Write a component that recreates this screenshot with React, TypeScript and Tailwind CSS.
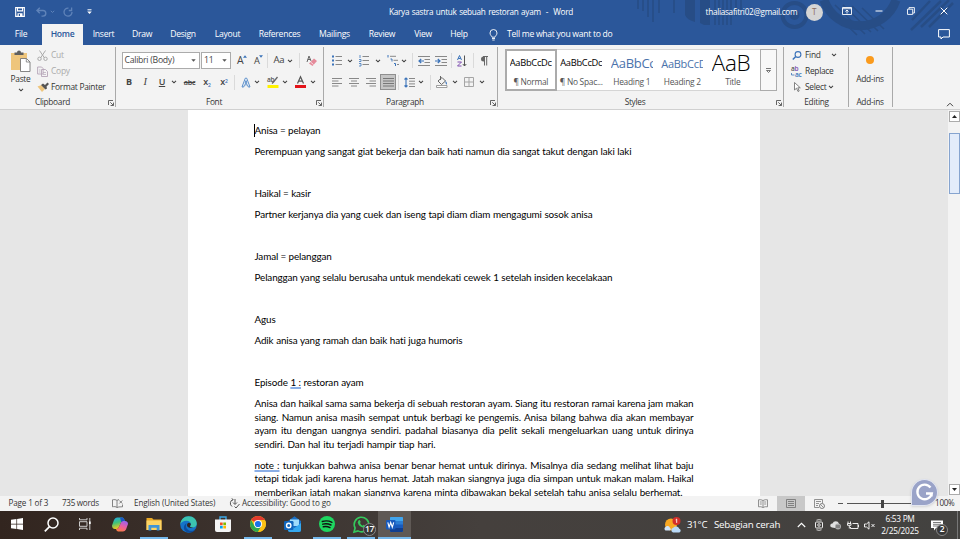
import React, { FC, ReactNode } from "react";
import clsx from "clsx";

interface IIconProps {
  w?: number;
  h?: number;
  box?: string;
  className?: string;
  children?: ReactNode;
}

const Icon: FC<IIconProps> = ({ w = 14, h = 14, box, className, children }) => (
  <svg width={w} height={h} viewBox={box ?? `0 0 ${w} ${h}`} fill="none" className={clsx("block shrink-0 overflow-visible", className)}>
    {children}
  </svg>
);

const Chevron: FC<{ className?: string }> = ({ className }) => (
  <Icon w={6} h={4} className={className}>
    <path d="M1 .8 3 2.8 5 .8" stroke="#444" strokeWidth="1.1" />
  </Icon>
);

const Triangle: FC = () => (
  <Icon w={5} h={3}>
    <path d="M.3.2h4.4L2.5 2.7z" fill="#555" />
  </Icon>
);

const Sep: FC<{ className?: string }> = ({ className }) => (
  <div className={clsx("w-px h-[15px] shrink-0 bg-[#dadada]", className)} />
);

const Launcher: FC = () => (
  <Icon w={6} h={6}>
    <path d="M.5 5V.5H5M2.3 2.3l3 3M5.5 2.6v2.9H2.6" stroke="#555" strokeWidth=".9" />
  </Icon>
);

interface IGroupProps {
  label: string;
  className: string;
  launcher?: boolean;
  children: ReactNode;
}

const Group: FC<IGroupProps> = ({ label, className, launcher, children }) => (
  <section className={clsx("relative flex flex-col shrink-0 h-full", className)}>
    <div className="h-[52px]">{children}</div>
    <div className="h-[13px] mt-px flex items-center justify-center text-[8.3px] font-medium text-[#333]">{label}</div>
    {launcher && (
      <div className="absolute right-[2.5px] bottom-[3px]">
        <Launcher />
      </div>
    )}
    <div className="absolute right-0 top-[2px] w-px h-[60px] bg-[#a9a9a9]" />
  </section>
);

const tabs = [
  { name: "File", className: "w-[42px]" },
  { name: "Home", className: "w-[41px] bg-[#f3f3f3] text-[#2b579a] font-semibold" },
  { name: "Insert", className: "w-[41px]" },
  { name: "Draw", className: "w-[36px]" },
  { name: "Design", className: "w-[46px]" },
  { name: "Layout", className: "w-[43px]" },
  { name: "References", className: "w-[61px]" },
  { name: "Mailings", className: "w-[49px]" },
  { name: "Review", className: "w-[46px]" },
  { name: "View", className: "w-[36px]" },
  { name: "Help", className: "w-[36px]" },
];

const stripes = [
  [638, 9], [643, 11], [648, 17], [653, 22], [659, 13], [674, 13],
  [715, 25], [719, 25], [723, 25], [727, 25], [731, 25], [736, 16], [741, 11],
];

const Header: FC = () => (
  <header className="relative h-[45px] bg-[#2b579a] text-white">
    <svg className="absolute inset-0" width="960" height="45" fill="none">
      {stripes.map(([x, h]) => (
        <path key={x} d={`M${x} 0v${h}`} stroke="#274d86" strokeWidth="1.6" />
      ))}
      <path d="M685 0h10v22q-8-2-10-7zM700 0h10v25h-6l-4-2z" fill="#274d86" />
      <circle cx="794.500" cy="15" r="12" stroke="#274d86" strokeWidth="4" />
      <circle cx="794.500" cy="15" r="5" fill="#274d86" />
      <path d="M824 0a38 38 0 0 0 72 0" stroke="#274d86" strokeWidth="9" />
      <path d="M828 7l29 28M835 5l30 29M843 5l28 27M852 6l26 25M862 8l22 21" stroke="#274d86" strokeWidth="1.600" />
      <path d="M911 30 941 1M921 27l28-27M912 20l18-19M929 27l24-24" stroke="#274d86" strokeWidth="2.500" />
    </svg>
    <div className="relative h-6 flex items-center text-[8.2px] font-medium">
      <Icon w={10} h={10} className="ml-[15px]">
        <path d="M.7.700h8.600v8.600H.7z" stroke="#fff" strokeWidth="1.200" />
        <path d="M2 1h6v3.500H2zM2.500 6.200h5V9h-5z" fill="#fff" />
        <path d="M3 1.600h4v1.700H3zM3.800 7h1.200v2H3.800z" fill="#2b579a" />
      </Icon>
      <Icon w={11} h={10} className="ml-[10.500px]">
        <path d="M3.800.8 1 3.500l2.800 2.700M1 3.500h6a2.800 2.800 0 0 1 0 5.600H5.500" stroke="#5f83b9" strokeWidth="1.400" />
      </Icon>
      <Icon w={5} h={4} className="ml-[3px]">
        <path d="M.8.800 2.500 2.500 4.200.8" stroke="#5f83b9" />
      </Icon>
      <Icon w={10} h={10} className="ml-[8.500px]">
        <path d="M5.500 1.200A4 4 0 1 0 9 5M8.600.5v3H5.800" stroke="#5f83b9" strokeWidth="1.300" />
      </Icon>
      <Icon w={5} h={6} className="ml-[14px]">
        <path d="M.5.800h4" stroke="#fff" />
        <path d="M.2 2.500h4.600L2.500 5z" fill="#fff" />
      </Icon>
      <span className="ml-[297px] mt-px w-[184px] shrink-0 whitespace-nowrap [text-align-last:justify]">Karya sastra untuk sebuah restoran ayam &nbsp;- &nbsp;Word</span>
      <span className="ml-[132.500px] w-[95px] shrink-0 whitespace-nowrap">thaliasafitri02@gmail.com</span>
      <span className="ml-[5px] size-[17px] shrink-0 rounded-full bg-[#d5d5d5] text-[#8a6a5a] flex items-center justify-center">T</span>
      <Icon w={10} h={8} className="ml-[19px] -mt-[2px]">
        <path d="M.5.500h9v7h-9zM.5 1.700h9M5 6.500V3M3.400 4.500 5 3l1.600 1.500" stroke="#fff" strokeWidth=".9" />
      </Icon>
      <Icon w={8} h={2} className="ml-[23px] -mt-[3px]">
        <path d="M.5 1h7" stroke="#fff" />
      </Icon>
      <Icon w={8} h={8} className="ml-[24.500px] -mt-[3px]">
        <path d="M.5 2.200h5.200v5.200H.5zM2 2V.6h5.400V6H6" stroke="#fff" strokeWidth=".9" />
      </Icon>
      <Icon w={8} h={8} className="ml-[24.500px] -mt-[3px]">
        <path d="m.7.700 6.600 6.600m0-6.600L.7 7.300" stroke="#fff" />
      </Icon>
    </div>
    <nav className="relative h-[21px] flex items-center text-[8.6px] font-medium">
      {tabs.map((tab) => (
        <div key={tab.name} className={clsx("h-full flex items-center justify-center", tab.className)}>
          {tab.name}
        </div>
      ))}
      <Icon w={9} h={12} className="ml-[12px]">
        <path d="M3 8.200C2.800 6.800 1 6.200 1 4a3.500 3.500 0 0 1 7 0c0 2.200-1.800 2.800-2 4.200zM3 9.500h3M3.300 11h2.400" stroke="#fff" strokeWidth=".9" />
      </Icon>
      <span className="ml-[9px] whitespace-nowrap">Tell me what you want to do</span>
      <Icon w={12} h={11} className="ml-auto mr-[10px] -mt-[1px]">
        <path d="M.6.600h10.800v7.400H5L3 10V8H.6z" stroke="#fff" />
      </Icon>
    </nav>
  </header>
);

const Clipboard: FC = () => (
  <Group label="Clipboard" className="w-[116px] pl-2 pr-[19px]" launcher>
    <div className="flex">
      <div className="w-[25px] shrink-0 flex flex-col items-center pt-[5px] text-[8.400px] text-[#333]">
        <Icon w={21} h={22}>
          <path d="M1 3h16v17H1z" fill="#eec57c" />
          <path d="M4.500 5V2.500H7a2 2 0 0 1 4 0h2.500V5z" fill="#5e5e5e" />
          <path d="M10.500 8.500h6l3.500 3.500v9.500h-9.500z" fill="#fff" stroke="#777" strokeWidth=".9" />
          <path d="M16.300 8.500V12H20" stroke="#777" strokeWidth=".8" />
        </Icon>
        <span className="leading-[11px] mt-[1px]">Paste</span>
        <Chevron className="mt-[4px]" />
      </div>
      <div className="ml-[4px] pt-[2px] text-[8.500px] text-[#aaa]">
        <div className="h-[16px] flex items-center gap-[3px]">
          <Icon w={11} h={11}>
            <path d="M2.500.500 7.500 8M8.500.500 3.500 8" stroke="#aaa" />
            <circle cx="2.500" cy="8.800" r="1.700" stroke="#aaa" />
            <circle cx="8.500" cy="8.800" r="1.700" stroke="#aaa" />
          </Icon>
          Cut
        </div>
        <div className="h-[16px] flex items-center gap-[3px]">
          <Icon w={11} h={11}>
            <path d="M.6 1h4l1.500 1.500V8H.6zM4.500 3.500h4l2 2v5h-6z" fill="#f3f3f3" stroke="#b5a5b8" strokeWidth=".9" />
            <path d="M6 6.500h3M6 8.500h3M2 4h1.500M2 6h1.500" stroke="#b5a5b8" strokeWidth=".7" />
          </Icon>
          Copy
        </div>
        <div className="h-[16px] flex items-center gap-[2px] text-[#333] whitespace-nowrap">
          <Icon w={12} h={10}>
            <path d="M.5 4.500 4.500 3l3.500 4-3 3z" fill="#eec57c" />
            <path d="m4 3 2-1.500L8 3l2.500-2.500L12 2 9.500 4.500l.5 2-1.500 1z" fill="#555" />
          </Icon>
          <span className="text-[8.400px]">Format Painter</span>
        </div>
      </div>
    </div>
  </Group>
);

const FontGroup: FC = () => (
  <Group label="Font" className="w-[208px] pr-[12px]" launcher>
    <div className="h-[31px] pl-[5.500px] flex items-center text-[#444]">
      <div className="w-[78px] h-[17px] shrink-0 border border-[#ababab] bg-white flex items-center justify-between pl-[2px] pr-[3px] text-[8.700px]">
        Calibri (Body)
        <Triangle />
      </div>
      <div className="ml-[1.500px] w-[30px] h-[17px] shrink-0 border border-[#ababab] bg-white flex items-center justify-between pl-[2px] pr-[3px] text-[8.700px]">
        11
        <Triangle />
      </div>
      <span className="ml-[6px] text-[10.500px]">A</span>
      <Icon w={4} h={3} className="-mt-[8px]"><path d="M0 2.700 2 .3l2 2.400z" fill="#3b73b9" /></Icon>
      <span className="ml-[6.500px] text-[9.300px]">A</span>
      <Icon w={4} h={3} className="-mt-[8px]"><path d="M0 .3 2 2.700 4 .3z" fill="#3b73b9" /></Icon>
      <Sep className="ml-[4px]" />
      <span className="ml-[5px] text-[9.600px]">Aa</span>
      <Chevron className="ml-[3px]" />
      <Sep className="ml-[6px]" />
      <Icon w={11} h={12} className="ml-[6px]">
        <path d="M1 7 3 1l2 5M1.800 4.500h2.800" stroke="#666" />
        <path d="m3 8.500 5-5 3 2.500-4.500 5z" fill="#e58a9a" />
        <path d="m4.500 7 3 2.500" stroke="#fff" strokeWidth=".7" />
      </Icon>
    </div>
    <div className="h-[12px] pl-[9px] flex items-center text-[#444] text-[9px]">
      <span className="w-[8px] shrink-0 text-center font-bold">B</span>
      <span className="ml-[8px] w-[8px] shrink-0 text-center italic font-['Liberation_Serif'] text-[10.500px]">I</span>
      <span className="ml-[9px] w-[8px] shrink-0 text-center underline font-semibold">U</span>
      <Chevron className="ml-[5px]" />
      <span className="ml-[6px] w-[13px] shrink-0 text-center line-through text-[7.300px] font-semibold tracking-[-.3px]">abc</span>
      <span className="ml-[6px] w-[10px] shrink-0 text-center font-semibold whitespace-nowrap">x<sub className="text-[5px] text-[#3b73b9]">2</sub></span>
      <span className="ml-[7px] w-[10px] shrink-0 text-center font-semibold whitespace-nowrap">x<sup className="text-[5px] text-[#3b73b9]">2</sup></span>
      <Sep className="ml-[5px]" />
      <Icon w={10} h={11} className="ml-[6px]">
        <path d="M1 10 4.300 1.200h1.400L9 10H7.300l-.8-2.200h-3L2.700 10zM4 6.300h2L5 3.500z" fill="#fff" stroke="#4a82c4" strokeWidth=".9" />
      </Icon>
      <Chevron className="ml-[3px]" />
      <Icon w={12} h={12} className="ml-[7px]">
        <text x="0" y="6" fontSize="6.500" fontWeight="600" fill="#555">ab</text>
        <path d="m10.500 1-4 5-1.500 1.500" stroke="#666" strokeWidth="1.300" />
        <path d="M.5 9h11v3H.5z" fill="#fff200" />
      </Icon>
      <Chevron className="ml-[3px]" />
      <Icon w={11} h={12} className="ml-[7px]">
        <path d="M2.500 7.500 5.500.8l3 6.700M3.600 5.200h3.800" stroke="#555" strokeWidth="1.200" />
        <path d="M0 9h11v3H0z" fill="#e3141a" />
      </Icon>
      <Chevron className="ml-[3.500px]" />
    </div>
  </Group>
);

const ParagraphGroup: FC = () => (
  <Group label="Paragraph" className="w-[174px] pr-[12px]" launcher>
    <div className="h-[31px] pl-[8px] flex items-center">
      <Icon w={10} h={11}>
        <path d="M0 1.500h2M0 5.500h2M0 9.500h2" stroke="#3b73b9" strokeWidth="1.800" />
        <path d="M3.500 1.500H10M3.500 5.500H10M3.500 9.500H10" stroke="#888" />
      </Icon>
      <Chevron className="ml-[5px]" />
      <Icon w={10} h={11} className="ml-[6px]">
        <path d="M1 0v3M0 4.500h2v2H0M0 8.500h2V11H0" stroke="#3b73b9" strokeWidth=".8" />
        <path d="M3.500 1.500H10M3.500 5.500H10M3.500 9.500H10" stroke="#888" />
      </Icon>
      <Chevron className="ml-[6px]" />
      <Icon w={12} h={11} className="ml-[6px]">
        <path d="M1 0v2.500M3.500 4h1.500v2.500M7 8.500h1.500V11" stroke="#3b73b9" />
        <path d="M3 1.300h6M6.500 5.300H11M10 9.500h2" stroke="#888" />
      </Icon>
      <Chevron className="ml-[2px]" />
      <Sep className="ml-[5px]" />
      <Icon w={12} h={10} className="ml-[5px]">
        <path d="M0 .5h12M6.500 3.500H12M6.500 6.500H12M0 9.500h12" stroke="#888" />
        <path d="M6 5H1m2.200-2L1 5l2.200 2" stroke="#3b73b9" strokeWidth="1.200" />
      </Icon>
      <Icon w={12} h={10} className="ml-[5px]">
        <path d="M0 .5h12M6.500 3.500H12M6.500 6.500H12M0 9.500h12" stroke="#888" />
        <path d="M0 5h5M2.800 3 5 5 2.800 7" stroke="#3b73b9" strokeWidth="1.200" />
      </Icon>
      <Sep className="ml-[4px]" />
      <Icon w={10} h={12} className="ml-[5px]">
        <path d="M.5 5 2.500.500 4.500 5M1.200 3.500h2.600" stroke="#3b73b9" />
        <path d="M.5 7h4l-4 4h4" stroke="#7f4fb0" />
        <path d="M7.500.500V11M5.800 9l1.700 2 1.800-2" stroke="#555" />
      </Icon>
      <Sep className="ml-[6px]" />
      <Icon w={8} h={10} className="ml-[6px]">
        <path d="M4.500.500h-1a2.400 2.400 0 0 0 0 5h1z" fill="#666" />
        <path d="M3 .5h5M4.500.500V9.500M6.700.500V9.500" stroke="#666" />
      </Icon>
    </div>
    <div className="h-[12px] pl-[8px] flex items-center">
      <Icon w={10} h={9}><path d="M0 .5h10M0 3h6.500M0 5.500h10M0 8h6.500" stroke="#888" /></Icon>
      <Icon w={10} h={9} className="ml-[7px]"><path d="M0 .5h10M2 3h6M0 5.500h10M2 8h6" stroke="#888" /></Icon>
      <Icon w={10} h={9} className="ml-[7px]"><path d="M0 .5h10M3.500 3H10M0 5.500h10M3.500 8H10" stroke="#888" /></Icon>
      <div className="ml-[4px] size-[16px] shrink-0 border border-[#8f8f8f] bg-[#c5c5c5] flex items-center justify-center">
        <Icon w={11} h={9}><path d="M0 .5h11M0 3h11M0 5.500h11M0 8h11" stroke="#777" /></Icon>
      </div>
      <Sep className="ml-[2px]" />
      <Icon w={11} h={11} className="ml-[5px]">
        <path d="M2 1v9M.5 2.500 2 1l1.500 1.500M.5 8.500 2 10l1.500-1.500" stroke="#3b73b9" strokeWidth="1.100" />
        <path d="M5 1.500h6M5 4.200h6M5 6.900h6M5 9.500h6" stroke="#888" />
      </Icon>
      <Chevron className="ml-[3px]" />
      <Sep className="ml-[6px]" />
      <Icon w={12} h={12} className="ml-[5px]">
        <path d="m2 5 4-3.500L9.500 5l-4 3.500zM4.500 0v4" stroke="#666" />
        <path d="M9.500 4.500q2 2 1 4.500-1.500-1-1-4.500" fill="#3b73b9" />
        <path d="M.5 9.500h10.500v2H.5z" fill="#fff" stroke="#888" strokeWidth=".8" />
      </Icon>
      <Chevron className="ml-[4px]" />
      <Icon w={10} h={10} className="ml-[6px]"><path d="M.5.500h9v9h-9zM5 .5v9M.5 5h9" stroke="#a5a5a5" /></Icon>
      <Chevron className="ml-[5px]" />
    </div>
  </Group>
);

const wordStyles = [
  { name: "¶ Normal", sample: "AaBbCcDc", className: "text-[9.300px] text-black font-medium" },
  { name: "¶ No Spac...", sample: "AaBbCcDc", className: "text-[9.300px] text-black font-medium" },
  { name: "Heading 1", sample: "AaBbCc", className: "text-[13px] text-[#4a72ab]" },
  { name: "Heading 2", sample: "AaBbCcD", className: "text-[11px] text-[#4a72ab]" },
  { name: "Title", sample: "AaB", className: "text-[22.500px] text-black font-light" },
];

const StylesGroup: FC = () => (
  <Group label="Styles" className="w-[286px] pr-[12px]" launcher>
    <div className="ml-[6.500px] mt-[4px] w-[272px] h-[42px] flex border border-[#d5d5d5] bg-white">
      {wordStyles.map((style, i) => (
        <div
          key={style.name}
          className={clsx(
            "w-[50.500px] shrink-0 flex flex-col items-center text-[8.400px] text-[#555]",
            i === 0 && "outline-2 outline-[#ababab] -outline-offset-1"
          )}
        >
          <div className={clsx("w-[42px] h-[26px] flex items-center overflow-hidden whitespace-nowrap leading-none", style.className)}>
            {style.sample}
          </div>
          <span className="leading-[12px] whitespace-nowrap">{style.name}</span>
        </div>
      ))}
      <div className="ml-auto w-[17px] h-[42px] -m-px border border-[#ababab] bg-[#f8f8f8] flex items-center justify-center">
        <Icon w={5} h={5}><path d="M0 .5h5M.5 2.500h4L2.500 4.500z" stroke="#555" strokeWidth=".8" /></Icon>
      </div>
    </div>
  </Group>
);

const Editing: FC = () => (
  <Group label="Editing" className="w-[65px]">
    <div className="pt-[2px] pl-[7.500px] text-[8.400px] text-[#333]">
      <div className="h-[16px] flex items-center">
        <Icon w={10} h={9}>
          <circle cx="6" cy="3.500" r="2.900" stroke="#3b73b9" strokeWidth="1.100" />
          <path d="M3.800 5.500.800 8.500" stroke="#3b73b9" strokeWidth="1.500" />
        </Icon>
        <span className="ml-[3.500px]">Find</span>
        <Chevron className="ml-auto mr-[12px]" />
      </div>
      <div className="h-[16px] flex items-center">
        <Icon w={11} h={11} className="-ml-px">
          <text x="0" y="5" fontSize="6.500" fontWeight="600" fill="#555">a<tspan fill="#7f4fb0">b</tspan></text>
          <text x="4" y="10.500" fontSize="6.500" fontWeight="600" fill="#3b73b9">ac</text>
          <path d="M.5 7v2h3" stroke="#3b73b9" strokeWidth=".8" />
        </Icon>
        <span className="ml-[3.500px]">Replace</span>
      </div>
      <div className="h-[16px] flex items-center">
        <Icon w={10} h={10}>
          <path d="M2.500.500v7.500l2-1.800L6 9.500l1.200-.5-1.400-3.200h2.500z" fill="#fff" stroke="#666" strokeWidth=".8" />
        </Icon>
        <span className="ml-[3.500px]">Select</span>
        <Chevron className="ml-[2px]" />
      </div>
    </div>
  </Group>
);

const Ribbon: FC = () => (
  <div className="relative h-[65px] flex bg-[#f3f3f3] border-b border-[#d0d0d0]">
    <Clipboard />
    <FontGroup />
    <ParagraphGroup />
    <StylesGroup />
    <Editing />
    <Group label="Add-ins" className="w-[44px] pr-[2px]">
      <div className="flex flex-col items-center text-[8.400px] text-[#333]">
        <div className="mt-[11px] size-[8px] rounded-full bg-[#fa9a1c]" />
        <span className="mt-[9px]">Add-ins</span>
      </div>
    </Group>
    <Icon w={8} h={5} className="ml-auto mr-[6px] mt-[57px]">
      <path d="M1 4.200 4 1.200l3 3" stroke="#444" />
    </Icon>
  </div>
);

const Mark: FC<{ children: ReactNode }> = ({ children }) => (
  <span className="underline decoration-[#8aaee6] decoration-2 underline-offset-1 [text-decoration-skip-ink:none]">{children}</span>
);

const lines: { text: ReactNode; className: string }[] = [
  { text: "Anisa = pelayan", className: "w-[66px]" },
  { text: "Perempuan yang sangat giat bekerja dan baik hati namun dia sangat takut dengan laki laki", className: "w-[377px]" },
  { text: "", className: "" },
  { text: "Haikal = kasir", className: "w-[55.500px]" },
  { text: "Partner kerjanya dia yang cuek dan iseng tapi diam diam mengagumi sosok anisa", className: "w-[338px]" },
  { text: "", className: "" },
  { text: "Jamal = pelanggan", className: "w-[77px]" },
  { text: "Pelanggan yang selalu berusaha untuk mendekati cewek 1 setelah insiden kecelakaan", className: "w-[358px]" },
  { text: "", className: "" },
  { text: "Agus", className: "w-[21px]" },
  { text: "Adik anisa yang ramah dan baik hati juga humoris", className: "w-[208px]" },
  { text: "", className: "" },
  { text: <>Episode <Mark>1 :</Mark> restoran ayam</>, className: "w-[109px]" },
];

const paragraphs: { text: ReactNode; className: string }[][] = [
  [
    { text: "Anisa dan haikal sama sama bekerja di sebuah restoran ayam. Siang itu restoran ramai karena jam makan", className: "w-[439px]" },
    { text: "siang. Namun anisa masih sempat untuk berbagi ke pengemis. Anisa bilang bahwa dia akan membayar", className: "w-[439px]" },
    { text: "ayam itu dengan uangnya sendiri. padahal biasanya dia pelit sekali mengeluarkan uang untuk dirinya", className: "w-[439px]" },
    { text: "sendiri. Dan hal itu terjadi hampir tiap hari.", className: "w-[181px]" },
  ],
  [
    { text: <><Mark>note :</Mark> tunjukkan bahwa anisa benar benar hemat untuk dirinya. Misalnya dia sedang melihat lihat baju</>, className: "w-[439px]" },
    { text: "tetapi tidak jadi karena harus hemat. Jatah makan siangnya juga dia simpan untuk makan malam. Haikal", className: "w-[439px]" },
    { text: "memberikan jatah makan siangnya karena minta dibawakan bekal setelah tahu anisa selalu berhemat.", className: "w-[428px]" },
  ],
];

const Line: FC<{ text: ReactNode; className: string }> = ({ text, className }) => (
  <p className={clsx("h-[13.600px] leading-[13.600px] whitespace-nowrap [text-align-last:justify]", className)}>{text}</p>
);

const Document: FC = () => (
  <main className="h-[386px] flex bg-[#e6e6e6] overflow-hidden">
    <article className="ml-[188px] w-[572px] h-full overflow-hidden bg-white pl-[66.500px] pt-[13.500px] text-[9.900px] tracking-[-.12px] text-black font-['Lato',sans-serif] [font-variant-ligatures:none]">
      <div className="relative flex flex-col gap-[7.450px]">
        <div className="absolute -left-px top-0 w-px h-[13px] bg-black" />
        {lines.map((line, i) => (
          <Line key={i} {...line} />
        ))}
        {paragraphs.map((paragraph, i) => (
          <div key={i}>
            {paragraph.map((line, j) => (
              <Line key={j} {...line} />
            ))}
          </div>
        ))}
      </div>
    </article>
    <div className="ml-auto w-[12px] flex flex-col items-center bg-[#f3f3f3] pt-[1px]">
      <div className="size-[11px] border border-[#ababab] bg-white flex items-center justify-center">
        <Icon w={5} h={3}><path d="M0 3 2.500 0 5 3z" fill="#222" /></Icon>
      </div>
      <div className="mt-[11px] w-[11px] h-[61px] border border-[#86a4cf] bg-[#e3ecfa]" />
      <div className="mt-auto mb-px size-[11px] border border-[#ababab] bg-white flex items-center justify-center">
        <Icon w={5} h={3}><path d="M0 0h5L2.500 3z" fill="#222" /></Icon>
      </div>
    </div>
  </main>
);

const StatusBar: FC = () => (
  <footer className="relative h-[15px] flex items-center bg-[#f3f3f3] text-[8.100px] text-[#333] whitespace-nowrap">
    <span className="ml-[8.500px] w-[40px] tracking-[-.15px]">Page 1 of 3</span>
    <span className="ml-[13.500px] w-[37px]">735 words</span>
    <Icon w={11} h={9} className="ml-[13px]">
      <path d="M5 1.500C4 .5 2 .5.500.800v7c1.500-.3 3.500-.3 4.500.7V1.500Q6 .6 7 .6M5 8.500q1-.8 5.500-.7V5.500M7.300 1.500l3 3m0-3-3 3" stroke="#666" strokeWidth=".8" />
    </Icon>
    <span className="ml-[11px] w-[82px] tracking-[-.12px]">English (United States)</span>
    <Icon w={11} h={11} className="ml-[13px]">
      <path d="M4 1.500A4 4 0 0 0 3 8.500M2.500 3 4 1.500 2.800.300M6 1v5M4 4.500 6 6.500l2-2M5.500 8.500l1.500 1.500 3.500-4" stroke="#555" />
    </Icon>
    <span className="ml-[2px] w-[89px] tracking-[-.1px]">Accessibility: Good to go</span>
    <Icon w={10} h={9} className="ml-[427px]">
      <path d="M5 1.500Q3 .3.500.800v7q2.500-.5 4.500.7 2-1.200 4.500-.7v-7Q7 .3 5 1.500v7M1.800 3h2M1.800 5h2M6.200 3h2M6.200 5h2" stroke="#777" strokeWidth=".8" />
    </Icon>
    <div className="ml-[9px] w-[28px] h-full bg-[#c8c8c8] flex items-center justify-center">
      <Icon w={10} h={9}><path d="M.5.500h9v8h-9zM2 2.500h6M2 4.500h6M2 6.500h6" stroke="#777" strokeWidth=".9" /></Icon>
    </div>
    <Icon w={11} h={10} className="ml-[9px]">
      <path d="M5 8.500H.5v-8h8V4M2 2.500h5M2 4.500h3M2 6.500h2" stroke="#777" strokeWidth=".8" />
      <circle cx="8" cy="7" r="2.500" stroke="#666" strokeWidth=".8" />
      <path d="m6.500 5.500 3 3" stroke="#666" strokeWidth=".7" />
    </Icon>
    <div className="ml-[13px] w-[5px] h-px bg-[#555]" />
    <div className="ml-[4px] w-[64px] h-px bg-[#555] flex items-center pl-[34px]">
      <div className="w-[3px] h-[8px] shrink-0 bg-[#444]" />
    </div>
    <span className="ml-auto mr-[5.500px]">100%</span>
    <div className="absolute left-[910.500px] -top-[17px] size-[27px] rounded-full rounded-bl-[5px] bg-[#9aa3c8] border border-[#e2e5f0] flex items-center justify-center shadow">
      <Icon w={19} h={19}>
        <path d="M15.500 4.500A7.300 7.300 0 1 0 16.800 10.500H11M16.500 13.500l.3-3.500" stroke="#fff" strokeWidth="2.300" />
      </Icon>
    </div>
  </footer>
);

const apps: { id: string; className: string; open?: boolean; icon: ReactNode }[] = [
  {
    id: "windows",
    className: "w-[34px]",
    icon: <Icon w={12} h={12}><path d="M0 1.700 5.400 1v4.700H0zM6.100.9 12 0v5.700H6.100zM0 6.400h5.400V11L0 10.300zM6.100 6.400H12V12l-5.900-.9z" fill="#fff" /></Icon>,
  },
  {
    id: "search",
    className: "w-[34px]",
    icon: (
      <Icon w={15} h={15}>
        <circle cx="9" cy="6" r="5" stroke="#fff" strokeWidth="1.500" />
        <path d="M5.500 9.700.8 14.400" stroke="#fff" strokeWidth="1.700" />
      </Icon>
    ),
  },
  {
    id: "taskview",
    className: "w-[34px]",
    icon: (
      <Icon w={12} h={12}>
        <path d="M.5 0v1.800h7.500V0M.5 12v-1.800h7.500V12M.5 3.700h7.500v4.600H.5zM10.800 0v12" stroke="#ddd" strokeWidth=".9" />
        <path d="M10 3.500h1.700V6H10z" fill="#fff" />
      </Icon>
    ),
  },
  {
    id: "copilot",
    className: "w-[36px]",
    icon: (
      <Icon w={16} h={15}>
        <defs>
          <linearGradient id="cpA" x1="0" y1="0" x2=".3" y2="1">
            <stop stopColor="#1fa8ee" />
            <stop offset=".5" stopColor="#3fc27a" />
            <stop offset="1" stopColor="#f2c81f" />
          </linearGradient>
          <linearGradient id="cpB" x1=".7" y1="0" x2=".3" y2="1">
            <stop stopColor="#9a62ee" />
            <stop offset=".5" stopColor="#ea5fa0" />
            <stop offset="1" stopColor="#fb7d45" />
          </linearGradient>
        </defs>
        <path d="M5 .5h5.500q1.500.2 2 2.500l.5 1h-2q-1.500 0-2 1.500L7 10q-.7 2-2.500 2H3q-3-.3-3-3.500L2 3Q3 .7 5 .5z" fill="url(#cpA)" />
        <path d="M11 14.500H6q-1.500-.2-2-2.500h.8q1.700-.3 2.200-2L9 5.500Q9.500 4 11 4h2q3 .3 3 3l-2 5.500q-1 2-3 2z" fill="url(#cpB)" />
        <path d="M8 .5h2.500q1.500.2 2 2.500l.5 1h-2q-1.200 0-1.800 1z" fill="#1a55c4" />
      </Icon>
    ),
  },
  {
    id: "explorer",
    className: "w-[32px]",
    open: true,
    icon: (
      <Icon w={16} h={14}>
        <path d="M.5 1h5.500l1.500 1.500h8V13H.5z" fill="#e9a825" />
        <path d="M.5 3.500h15V13H.5z" fill="#fcd466" />
        <path d="M2.500 8h11v5.500h-2.800v-2.700H5.300v2.700H2.500z" fill="#3f95d8" />
      </Icon>
    ),
  },
  {
    id: "edge",
    className: "w-[37px]",
    icon: (
      <Icon w={17} h={17}>
        <circle cx="8.500" cy="8.500" r="8.300" fill="#1573c8" />
        <path d="M.3 8.200C.7 3.500 4.200.2 8.600.2c5 0 8.200 3.500 8.200 7 0 3-2 4.300-4.300 4.300-1.800 0-2.500-.7-2.500-1.200 0-.6.900-.9.900-2.300C10.900 6 9 4.700 6.500 4.700 3.500 4.700 1.200 6 .3 8.200z" fill="#3cc4b0" />
        <path d="M6.200 8.500c-1 3 1.300 6.300 5 6.300 1.700 0 3-.5 4.300-1.500-2 3.500-6 4-8.500 3C3.500 15 2.500 9.500 6.500 7.300" fill="#0c4c9e" />
        <path d="M7 9.300c0-1.300.8-2.300 1.800-2.500 1.200 0 2.100.7 2 1.700-.1.900-.9 1.200-.8 2 .2.700 1.200 1.200 3.300 1-1 .8-6.300 1-6.300-2.200z" fill="#30251f" />
      </Icon>
    ),
  },
  {
    id: "store",
    className: "w-[32px]",
    icon: (
      <Icon w={16} h={16}>
        <path d="M5 4V1h6v3" stroke="#3da9e8" strokeWidth="1.400" />
        <path d="M0 3.500h16V14q0 2-2 2H2q-2 0-2-2z" fill="#f5f5f5" />
        <path d="M5 6.500h2.700v2.700H5z" fill="#f25022" />
        <path d="M8.300 6.500H11v2.700H8.300z" fill="#7fba00" />
        <path d="M5 9.800h2.700v2.700H5z" fill="#00a4ef" />
        <path d="M8.300 9.800H11v2.700H8.300z" fill="#ffb900" />
      </Icon>
    ),
  },
  {
    id: "chrome",
    className: "w-[37px]",
    open: true,
    icon: (
      <Icon w={16} h={16}>
        <circle cx="8" cy="8" r="8" fill="#fbc116" />
        <path d="M8 8 1.100 4A8 8 0 0 1 14.900 4z" fill="#e33b2e" />
        <path d="M1.100 4A8 8 0 0 0 8 16l3.500-6L8 8 4.500 10z" fill="#2da94f" />
        <path d="M8 4h6.900A8 8 0 0 1 8 16l3.500-6z" fill="#fbc116" />
        <circle cx="8" cy="8" r="4" fill="#fff" />
        <circle cx="8" cy="8" r="3.100" fill="#1a73e8" />
      </Icon>
    ),
  },
  {
    id: "outlook",
    className: "w-[32px]",
    icon: (
      <Icon w={17} h={16}>
        <path d="M4 5 10.500.300 17 5v9q0 2-2 2H6q-2 0-2-2z" fill="#1a6fc4" />
        <path d="M6 3.500h9V10H6z" fill="#9fdcfb" />
        <path d="m4 8 6.500 4L17 7v7q0 2-2 2H6q-2 0-2-2z" fill="#35a8ee" />
        <rect x="0" y="5" width="9.500" height="9" rx="1.200" fill="#1066bd" />
        <circle cx="4.700" cy="9.500" r="2.200" stroke="#fff" strokeWidth="1.400" />
      </Icon>
    ),
  },
  {
    id: "spotify",
    className: "w-[37px]",
    open: true,
    icon: (
      <Icon w={16} h={16}>
        <circle cx="8" cy="8" r="8" fill="#1ed760" />
        <path d="M3.300 5.500q5-1.500 9.700.8M3.800 8.200q4.200-1.200 8.200.8M4.300 10.800q3.500-.9 6.700.8" stroke="#111" strokeWidth="1.400" strokeLinecap="round" />
      </Icon>
    ),
  },
  {
    id: "whatsapp",
    className: "w-[32px] relative",
    open: true,
    icon: (
      <>
        <Icon w={17} h={17}>
          <path d="m1 16 1.100-4A7.300 7.300 0 1 1 5 14.900z" stroke="#34c95c" strokeWidth="1.600" />
          <path d="M5.500 4.500q1.200-1 1.700.3l.5 1.300-.7 1q1 2 2.700 2.600l1-1 2 1q-.2 2-2.200 2-4.500-.7-5.800-5.200z" fill="#34c95c" />
        </Icon>
        <span className="absolute left-[18px] top-[12px] size-[13px] rounded-full bg-[#383838] border border-[#888] text-white text-[8.500px] font-semibold flex items-center justify-center">17</span>
      </>
    ),
  },
  {
    id: "word",
    className: "w-[33px] ml-[1px] bg-[#5f5955]",
    open: true,
    icon: (
      <Icon w={17} h={15}>
        <rect x="4" y="0" width="13" height="15" rx="1" fill="#2b7cd3" />
        <path d="M4 1q0-1 1-1h11q1 0 1 1v3H4z" fill="#41a5ee" />
        <path d="M4 7.500h13V11H4z" fill="#185abd" />
        <path d="M4 11h13v3q0 1-1 1H5q-1 0-1-1z" fill="#103f91" />
        <rect x="0" y="3" width="9.500" height="9.500" rx="1" fill="#185abd" />
        <path d="m1.800 5.300 1.300 4.900 1.600-4.700 1.600 4.700 1.400-4.900" stroke="#fff" strokeWidth="1.100" />
      </Icon>
    ),
  },
];

const Taskbar: FC = () => (
  <div className="h-7 flex items-center bg-linear-to-r from-[#32251f] via-[#45403d] via-50% to-[#434240] text-white">
    {apps.map((app) => (
      <div key={app.id} className={clsx("h-full shrink-0 flex flex-col items-center", app.className)}>
        <div className="h-[26px] flex items-center">{app.icon}</div>
        {app.open && <div className={clsx("h-[2px] bg-[#76b9ed]", app.id === "word" ? "w-full" : "w-[28px]")} />}
      </div>
    ))}
    <Icon w={17} h={17} className="ml-[253px]">
      <circle cx="7" cy="7.500" r="6" fill="#f8a823" />
      <path d="M9 15.500a2.500 2.500 0 0 1 .3-4.800 3.500 3.500 0 0 1 6 1 2 2 0 0 1 0 3.800z" fill="#b9d9f7" />
      <path d="M1.500 13.500a2 2 0 0 1 0-3.500 2.500 2.500 0 0 1 4.500 1 1.400 1.400 0 0 1 0 2.500z" fill="#cfe4fa" />
      <circle cx="12.500" cy="4" r="4" fill="#d32f2a" />
      <path d="m11.700 2.800 1-.7v3.800" stroke="#fff" strokeWidth=".9" />
    </Icon>
    <span className="ml-[6px] w-[22px] text-[9.700px] whitespace-nowrap">31°C</span>
    <span className="ml-[5px] w-[67px] text-[9.700px] tracking-[-.2px] whitespace-nowrap">Sebagian cerah</span>
    <Icon w={9} h={6} className="ml-[16px]"><path d="m.8 5 3.700-3.700L8.200 5" stroke="#fff" strokeWidth="1.100" /></Icon>
    <Icon w={8} h={12} className="ml-[9px]">
      <rect x=".5" y="3" width="7" height="6" rx="1" stroke="#fff" strokeWidth=".9" />
      <circle cx="4" cy="6" r="1.300" stroke="#fff" strokeWidth=".8" />
      <path d="M1.500 1.200q2.500-1 5 0M1.500 10.800q2.500 1 5 0" stroke="#fff" strokeWidth=".8" />
    </Icon>
    <Icon w={11} h={10} className="ml-[7px]">
      <path d="M2 7.500a2 2 0 0 1 .5-4A3.500 3.500 0 0 1 9 3.500L5 8z" fill="#e0e0e0" />
      <circle cx="8" cy="6.500" r="3" fill="#aaa" />
      <path d="M7 5v3M9 5v3" stroke="#444" strokeWidth=".8" />
    </Icon>
    <Icon w={12} h={9} className="ml-[6px]">
      <path d="M5.500 2.500H11v5H3.500V6M11.500 4v2M1 .5v2M3.500.500v2M.5 2.500H4v1.800H.5zM2.300 4.500v3" stroke="#fff" strokeWidth=".9" />
    </Icon>
    <Icon w={11} h={9} className="ml-[5px]">
      <path d="M.5 3h2L5 .8v7.400L2.500 6h-2zM7.500 3l3 3m0-3-3 3" stroke="#fff" strokeWidth=".9" />
    </Icon>
    <div className="ml-[5px] w-[40px] flex flex-col items-center text-[8.300px] leading-[12.500px] whitespace-nowrap">
      <span>6:53 PM</span>
      <span className="tracking-[-.2px]">2/25/2025</span>
    </div>
    <div className="relative ml-[11px]">
      <Icon w={12} h={11}>
        <path d="M0 .5h12V8H5L3 10.500V8H0z" fill="#fff" />
        <path d="M2 2.500h8M2 4.300h8M2 6h5" stroke="#444" strokeWidth=".7" />
      </Icon>
      <span className="absolute left-[5px] top-[4px] size-[12px] rounded-full bg-[#383838] border border-[#888] text-[8.500px] font-semibold flex items-center justify-center">2</span>
    </div>
    <div className="ml-auto mr-[2px] w-px h-full bg-[#777]" />
  </div>
);

const App: FC = () => (
  <div className="w-[960px] h-[539px] overflow-hidden tracking-[-.28px] font-['Open_Sans',sans-serif]">
    <Header />
    <Ribbon />
    <Document />
    <StatusBar />
    <Taskbar />
  </div>
);

export default App;
